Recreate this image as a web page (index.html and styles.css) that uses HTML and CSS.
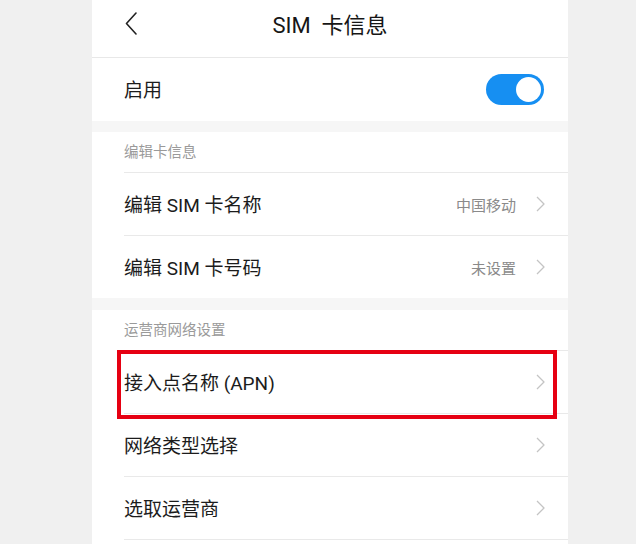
FILE: index.html
```html
<!DOCTYPE html>
<html lang="zh-CN">
<head>
<meta charset="utf-8">
<title>SIM 卡信息</title>
<link rel="stylesheet" href="styles.css">
</head>
<body>
<div class="phone">
  <header class="topbar">
    <div class="back">
      <svg width="12" height="23" viewBox="0 0 12 23"><path d="M11 1 L1.5 11.5 L11 22" fill="none" stroke="#222" stroke-width="1.6" stroke-linecap="round" stroke-linejoin="round"/></svg>
    </div>
    <h1 class="title">SIM&nbsp; 卡信息</h1>
    <div></div>
  </header>

  <div class="enable-row">
    <span class="label">启用</span>
    <span class="toggle"><span class="knob"></span></span>
  </div>

  <div class="gap gap1"></div>

  <section class="section">
    <div class="section-title">编辑卡信息</div>
    <div class="item">
      <span class="label">编辑 SIM 卡名称</span>
      <span class="value">中国移动</span>
      <svg class="chev" width="9" height="16" viewBox="0 0 9 16"><path d="M1 1 L8 8 L1 15" fill="none" stroke="#c4c4c4" stroke-width="1.3" stroke-linejoin="round"/></svg>
    </div>
    <div class="item">
      <span class="label">编辑 SIM 卡号码</span>
      <span class="value">未设置</span>
      <svg class="chev" width="9" height="16" viewBox="0 0 9 16"><path d="M1 1 L8 8 L1 15" fill="none" stroke="#c4c4c4" stroke-width="1.3" stroke-linejoin="round"/></svg>
    </div>
  </section>

  <div class="gap gap2"></div>

  <section class="section">
    <div class="section-title">运营商网络设置</div>
    <div class="item apn">
      <span class="label">接入点名称 (APN)</span>
      <svg class="chev" width="9" height="16" viewBox="0 0 9 16"><path d="M1 1 L8 8 L1 15" fill="none" stroke="#c4c4c4" stroke-width="1.3" stroke-linejoin="round"/></svg>
    </div>
    <div class="item">
      <span class="label">网络类型选择</span>
      <svg class="chev" width="9" height="16" viewBox="0 0 9 16"><path d="M1 1 L8 8 L1 15" fill="none" stroke="#c4c4c4" stroke-width="1.3" stroke-linejoin="round"/></svg>
    </div>
    <div class="item">
      <span class="label">选取运营商</span>
      <svg class="chev" width="9" height="16" viewBox="0 0 9 16"><path d="M1 1 L8 8 L1 15" fill="none" stroke="#c4c4c4" stroke-width="1.3" stroke-linejoin="round"/></svg>
    </div>
    <div class="item tail"></div>
  </section>
</div>
</body>
</html>
```

FILE: styles.css
```css
* { box-sizing: border-box; }
html, body { margin: 0; padding: 0; }
body {
  background: #f0f0f0;
  font-family: Roboto, "Noto Sans CJK SC", sans-serif;
  color: #1c1c1c;
}
.phone {
  width: 476px;
  margin-left: 92px;
  background: #ffffff;
  height: 544px;
  overflow: hidden;
}
.topbar {
  height: 58px;
  border-bottom: 1px solid #e8e8e8;
  display: grid;
  grid-template-columns: 1fr auto 1fr;
  align-items: center;
}
.back {
  padding-left: 33px;
  display: flex;
  align-items: center;
  padding-bottom: 10px;
}
.title {
  margin: 0;
  font-size: 22px;
  font-weight: 400;
  padding-bottom: 12px;
  color: #161616;
}
.enable-row {
  height: 63px;
  display: flex;
  align-items: center;
  justify-content: space-between;
  padding: 0 24px 0 32px;
}
.label {
  font-size: 19px;
  flex: 1;
  color: #1c1c1c;
  padding-bottom: 2px;
}
.toggle {
  width: 58px;
  height: 31px;
  border-radius: 16px;
  background: #168ff2;
  display: flex;
  align-items: center;
  justify-content: flex-end;
  padding-right: 3px;
}
.knob {
  width: 25px;
  height: 25px;
  border-radius: 50%;
  background: #ffffff;
}
.gap { background: #f6f6f6; }
.gap1 { height: 11px; }
.gap2 { height: 12px; }
.section-title {
  height: 40px;
  padding-left: 32px;
  padding-bottom: 3px;
  display: flex;
  align-items: center;
  font-size: 14.5px;
  color: #9a9a9a;
}
.item {
  margin-left: 32px;
  border-top: 1px solid #e9e9e9;
  height: 63px;
  display: flex;
  align-items: center;
  padding-right: 23px;
}
.item.tail { height: 5px; }
.value {
  font-size: 15px;
  color: #8a8a8a;
  margin-right: 20px;
}
.apn { position: relative; }
.apn::after {
  content: "";
  position: absolute;
  top: -1px;
  left: -7px;
  right: 11px;
  bottom: -6px;
  border: 4px solid #e60012;
}
```
